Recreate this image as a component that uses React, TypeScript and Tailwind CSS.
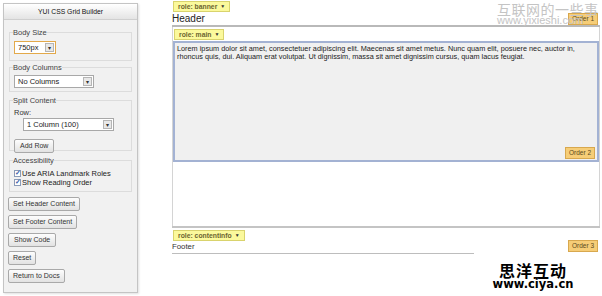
const fieldBox = "mx-[5px] border border-[#dcdcdc] px-[4px]"
const legendCls = "ml-[-1px] px-0 text-[7.5px] leading-[9px] text-[#444]"
const btnCls =
  "h-[14px] px-[4px] border border-[#a9a9a9] rounded-[2px] bg-gradient-to-b from-[#fdfdfd] to-[#e2e2e2] text-[7px] leading-[12px] text-[#333] whitespace-nowrap"

function FakeSelect({ label, width, active }: { label: string; width: number; active?: boolean }) {
  return (
    <div
      className={
        "flex items-center justify-between h-[13px] bg-white pl-[3px] pr-[1px] border " +
        (active ? "border-[#e3a94a]" : "border-[#a8a8a8]")
      }
      style={{ width }}
    >
      <span className="text-[7.5px] leading-[11px] text-[#222]">{label}</span>
      <span className="flex items-center justify-center w-[9px] h-[9px] border border-[#b5b5b5] bg-[#e8e8e8] text-[6px] leading-none text-[#333]">
        ▾
      </span>
    </div>
  )
}

function Check({ label }: { label: string }) {
  return (
    <div className="flex items-center gap-[1px] h-[9px]">
      <span className="relative w-[7px] h-[7px] border border-[#8a9bb8] bg-white">
        <span className="absolute left-[0px] top-[-3px] text-[7px] leading-[9px] font-bold text-[#3d62a8]">✓</span>
      </span>
      <span className="text-[7.5px] leading-[9px] text-[#222]">{label}</span>
    </div>
  )
}

function RoleBadge({ label }: { label: string }) {
  return (
    <div className="flex items-center h-[11px] px-[4px] border border-[#d9d36d] bg-[#fbf99c] text-[6.8px] leading-[9px] font-bold text-[#6b6430] whitespace-nowrap">
      {label} <span className="ml-[3px] text-[5px] text-[#333]">▼</span>
    </div>
  )
}

function OrderBadge({ n }: { n: number }) {
  return (
    <div className="h-[12px] px-[3px] border border-[#d8a84e] bg-[#f6cd77] text-[6.5px] leading-[10px] text-[#5a4a20] whitespace-nowrap">
      Order {n}
    </div>
  )
}

function Panel() {
  return (
    <div className="ml-[3px] mt-[3px] w-[135px] h-[290px] border border-[#c4c4c4] bg-[#f1f1f1] shadow-[1px_1px_2px_rgba(0,0,0,0.12)]">
      <div className="h-[16px] border-b border-[#cfcfcf] bg-gradient-to-b from-[#ffffff] to-[#e4e4e4] text-center text-[6.8px] leading-[16px] text-[#111]">
        YUI CSS Grid Builder
      </div>

      <fieldset className={fieldBox + " mt-[8px] h-[33px]"}>
        <legend className={legendCls}>Body Size</legend>
        <div className="mt-[4px]">
          <FakeSelect label="750px" width={42} active />
        </div>
      </fieldset>

      <fieldset className={fieldBox + " mt-[2px] h-[29px]"}>
        <legend className={legendCls}>Body Columns</legend>
        <div className="mt-[3px]">
          <FakeSelect label="No Columns" width={80} />
        </div>
      </fieldset>

      <fieldset className={fieldBox + " mt-[4px] h-[55px]"}>
        <legend className={legendCls}>Split Content</legend>
        <div className="text-[7.5px] leading-[9px] text-[#333] mt-[3px]">Row:</div>
        <div className="ml-[9px] mt-[1px]">
          <FakeSelect label="1 Column (100)" width={91} />
        </div>
        <button className={btnCls + " mt-[1px] px-[5px]"}>Add Row</button>
      </fieldset>

      <fieldset className={fieldBox + " mt-[5px] h-[36px]"}>
        <legend className={legendCls}>Accessibility</legend>
        <div className="mt-[4px]">
          <Check label="Use ARIA Landmark Roles" />
          <Check label="Show Reading Order" />
        </div>
      </fieldset>

      <div className="flex flex-col items-start gap-[4px] ml-[4px] mt-[5px]">
        <button className={btnCls}>Set Header Content</button>
        <button className={btnCls}>Set Footer Content</button>
        <button className={btnCls + " px-[5px]"}>Show Code</button>
        <button className={btnCls}>Reset</button>
        <button className={btnCls}>Return to Docs</button>
      </div>
    </div>
  )
}

function Canvas() {
  return (
    <div className="ml-[34px] w-[428px] flex flex-col leading-none">
      {/* header */}
      <div className="flex mt-[1px] ml-[1px]">
        <RoleBadge label="role: banner" />
      </div>
      <div className="flex items-start justify-between h-[15px] border-b-2 border-[#b9b9b9]">
        <span className="text-[10px] leading-[13px] text-[#222]">Header</span>
        <div className="mt-[1px] mr-[2px]">
          <OrderBadge n={1} />
        </div>
      </div>

      {/* body */}
      <div className="border-x border-[#d4d4d4] h-[199px] flex flex-col">
        <div className="flex mt-[2px] ml-[1px]">
          <RoleBadge label="role: main" />
        </div>
        <div className="mt-[1px] h-[121px] border-2 border-[#a3b2d3] bg-[#f0f0f0] flex flex-col justify-between px-[2px] pt-[2px] pb-[1px]">
          <p className="text-[7.3px] leading-[8px] text-[#222]">
            Lorem ipsum dolor sit amet, consectetuer adipiscing elit. Maecenas sit amet metus. Nunc quam elit, posuere nec, auctor in,
            rhoncus quis, dui. Aliquam erat volutpat. Ut dignissim, massa sit amet dignissim cursus, quam lacus feugiat.
          </p>
          <div className="self-end">
            <OrderBadge n={2} />
          </div>
        </div>
      </div>

      {/* footer */}
      <div className="border-t-2 border-[#c4c4c4]">
        <div className="flex mt-[2px] ml-[1px]">
          <RoleBadge label="role: contentinfo" />
        </div>
        <div className="flex items-start justify-between">
          <div className="w-[302px] h-[13px] border-b border-[#bdbdbd] text-[7.8px] leading-[12px] text-[#333]">Footer</div>
          <div className="mt-[-1px] mr-[2px]">
            <OrderBadge n={3} />
          </div>
        </div>
      </div>
    </div>
  )
}

export default function App() {
  return (
    <div className="relative w-[602px] h-[296px] overflow-hidden bg-white font-['Liberation_Sans',Arial,sans-serif] flex items-start">
      <Panel />
      <Canvas />

      {/* watermarks */}
      <div className="absolute left-[497px] top-[2px] text-[#c4c4c4] leading-none whitespace-nowrap pointer-events-none">
        <div className="text-[14px] tracking-[0.5px] font-['Noto_Sans_CJK_SC',sans-serif]">互联网的一些事</div>
        <div className="text-[11px] mt-[-1px]">www.yixieshi.com</div>
      </div>
      <div className="absolute left-[493px] top-[262px] w-[80px] flex flex-col items-center whitespace-nowrap text-black font-bold leading-none [text-shadow:0_0_1px_#fff,1px_1px_0_#fff]">
        <div className="text-[16px] tracking-[1px] font-['Noto_Sans_CJK_SC',sans-serif]">思洋互动</div>
        <div className="text-[11.5px] mt-[1px] font-['DejaVu_Sans',sans-serif]">www.ciya.cn</div>
      </div>
    </div>
  )
}
